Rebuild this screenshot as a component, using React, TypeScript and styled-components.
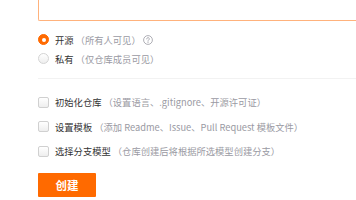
import React from "react";
import styled, { createGlobalStyle } from "styled-components";

const Global = createGlobalStyle`
  html, body { margin: 0; padding: 0; background: #fff; }
  body { font-family: "Noto Sans CJK SC", "Noto Sans", sans-serif; -webkit-font-smoothing: antialiased; }
  * { box-sizing: border-box; }
`;

const Page = styled.div`
  width: 356px;
  height: 200px;
  overflow: hidden;
  padding-left: 38px;
  display: flex;
  flex-direction: column;
`;

const InputBox = styled.div`
  height: 21px;
  border-left: 1px solid #ffb27c;
  border-bottom: 1px solid #ffb27c;
  border-bottom-left-radius: 2px;
  flex-shrink: 0;
`;

const RadioGroup = styled.div`
  margin-top: 9px;
  display: flex;
  flex-direction: column;
`;

const Row = styled.label<{ $h: number }>`
  height: ${(p) => p.$h}px;
  display: flex;
  align-items: center;
  font-size: 9.3px;
  color: #333;
  white-space: nowrap;
`;

const RadioDot = styled.span<{ $checked?: boolean }>`
  width: 11px;
  height: 11px;
  border-radius: 50%;
  flex-shrink: 0;
  margin-right: 6px;
  position: relative;
  ${(p) =>
    p.$checked
      ? `background: #ff6a00; border: 1px solid #ff6a00;`
      : `background: linear-gradient(#ffffff, #eeeeee); border: 1px solid #d4d4d4;`}
  &::after {
    content: "";
    display: ${(p) => (p.$checked ? "block" : "none")};
    position: absolute;
    left: 50%;
    top: 50%;
    width: 4px;
    height: 4px;
    margin: -2px 0 0 -2px;
    border-radius: 50%;
    background: #fff;
  }
`;

const CheckBox = styled.span`
  width: 11px;
  height: 11px;
  border-radius: 2px;
  flex-shrink: 0;
  margin-right: 6px;
  background: linear-gradient(#ffffff, #eeeeee);
  border: 1px solid #d0d0d0;
`;

const Label = styled.span`
  color: #333;
`;

const Hint = styled.span`
  color: #9a9aa3;
  margin-left: 2px;
`;

const HelpIcon = styled.svg`
  width: 10px;
  height: 10px;
  margin-left: 2px;
  flex-shrink: 0;
`;

const Divider = styled.div`
  margin-top: 10px;
  height: 1px;
  background: #f2f2f2;
  margin-right: -10px;
  flex-shrink: 0;
`;

const CheckGroup = styled.div`
  margin-top: 11px;
  display: flex;
  flex-direction: column;
`;

const CreateButton = styled.button`
  margin-top: 9.5px;
  width: 58px;
  height: 24px;
  border: none;
  border-radius: 1px;
  background: #ff6a00;
  color: #fff;
  font-family: "Noto Sans CJK SC", sans-serif;
  font-size: 11.5px;
  font-weight: 700;
  padding: 0;
  flex-shrink: 0;
`;

const Help = () => (
  <HelpIcon viewBox="0 0 10 10" fill="none">
    <circle cx="5" cy="5" r="4.4" stroke="#9a9aa3" strokeWidth="0.8" />
    <path
      d="M3.7 3.9a1.3 1.3 0 1 1 1.9 1.15c-.4.22-.6.45-.6.9v.35"
      stroke="#9a9aa3"
      strokeWidth="0.8"
      strokeLinecap="round"
    />
    <circle cx="5" cy="7.5" r="0.5" fill="#9a9aa3" />
  </HelpIcon>
);

const checks = [
  { label: "初始化仓库", hint: "（设置语言、.gitignore、开源许可证）" },
  { label: "设置模板", hint: "（添加 Readme、Issue、Pull Request 模板文件）" },
  { label: "选择分支模型", hint: "（仓库创建后将根据所选模型创建分支）" },
];

export default function App() {
  return (
    <>
      <Global />
      <Page>
        <InputBox />
        <RadioGroup>
          <Row $h={19}>
            <RadioDot $checked />
            <Label>开源</Label>
            <Hint>（所有人可见）</Hint>
            <Help />
          </Row>
          <Row $h={19}>
            <RadioDot />
            <Label>私有</Label>
            <Hint>（仅仓库成员可见）</Hint>
          </Row>
        </RadioGroup>
        <Divider />
        <CheckGroup>
          {checks.map((c) => (
            <Row $h={24.5} key={c.label}>
              <CheckBox />
              <Label>{c.label}</Label>
              <Hint>{c.hint}</Hint>
            </Row>
          ))}
        </CheckGroup>
        <CreateButton>创建</CreateButton>
      </Page>
    </>
  );
}
